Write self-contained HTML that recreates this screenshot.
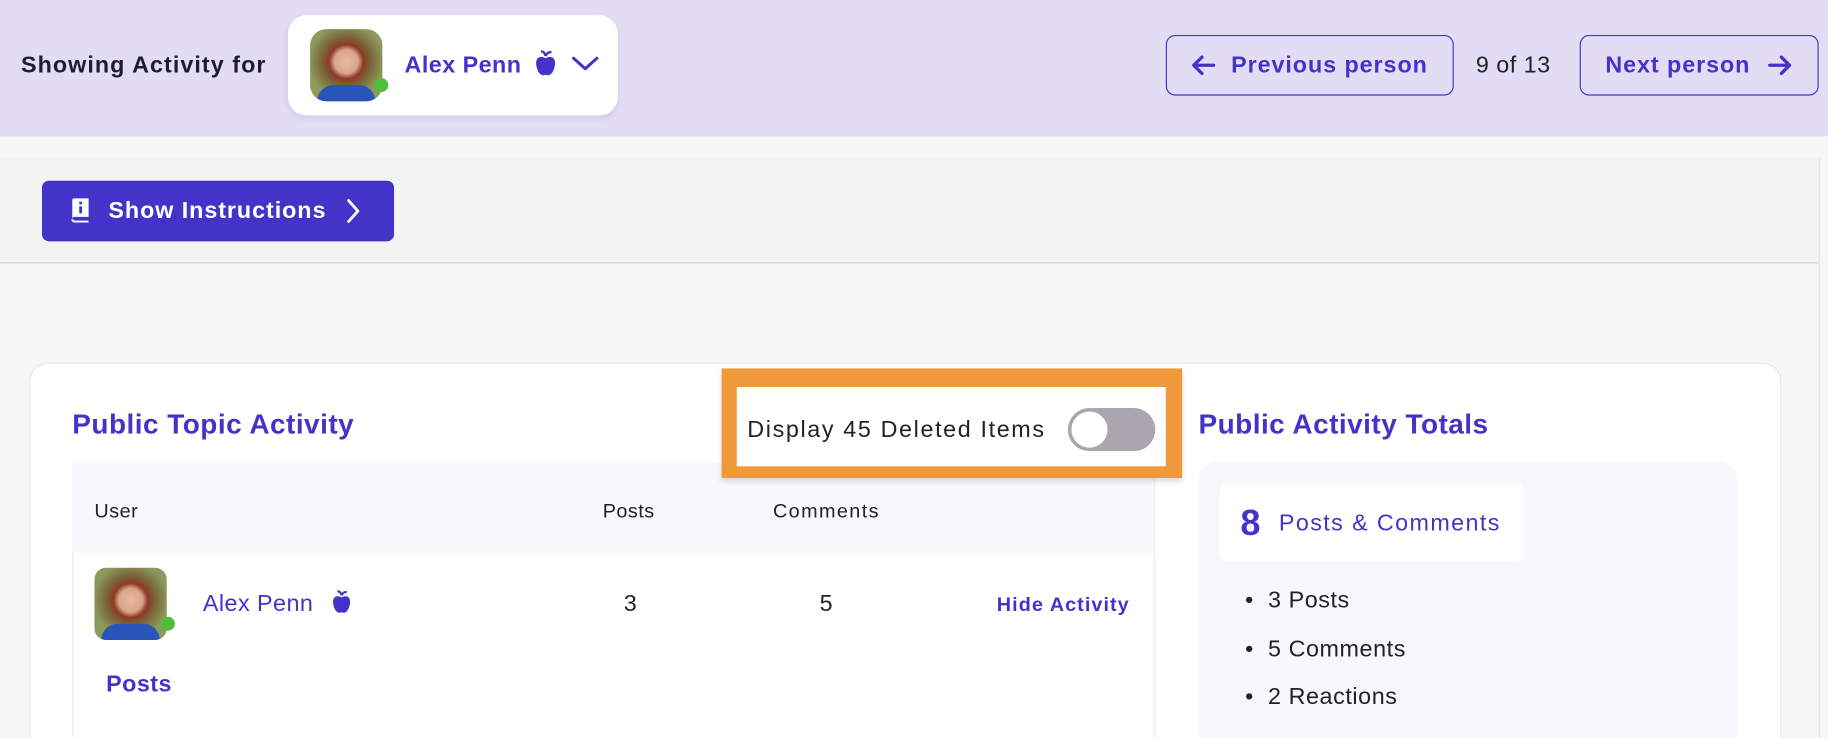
<!DOCTYPE html>
<html><head><meta charset="utf-8"><style>
*{box-sizing:border-box;margin:0;padding:0}
html,body{width:1828px;height:738px;overflow:hidden;background:#f7f7f7;font-family:"Liberation Sans",sans-serif}
#w{position:absolute;left:0;top:0;width:1568px;height:633px;overflow:hidden;transform:scale(1.16582);transform-origin:0 0}
.a{position:absolute;letter-spacing:0.4px}
.p{color:#4433c8}
</style></head><body><div id="w">
<div class="a" style="left:0;top:0;width:1568px;height:117px;background:#e2ddf5"></div>
<div class="a" style="left:18px;top:45px;font-size:20px;font-weight:bold;color:#1f1d2b;letter-spacing:0.9px">Showing Activity for</div>
<div class="a" style="left:247px;top:13px;width:283px;height:86px;background:#fff;border-radius:16px;box-shadow:0 2px 6px rgba(0,0,0,.08)"></div>
<div class="a" style="left:266px;top:25px;width:62px;height:62px;border-radius:14px;background:radial-gradient(circle at 50% 45%,#e8b9a0 0,#d9a58c 22%,#8b3a26 32%,#7b6a3c 48%,#8c9a5c 70%);overflow:hidden"><div class="a" style="left:6px;top:48px;width:50px;height:14px;border-radius:20px 20px 0 0;background:#2a55b8"></div></div>
<div class="a" style="left:321px;top:67px;width:12px;height:12px;border-radius:50%;background:#4fbf3a"></div>
<div class="a p" style="left:347px;top:45px;font-size:20px;font-weight:bold">Alex Penn</div>
<svg class="a" style="left:458px;top:43px" width="20" height="24" viewBox="0 0 20 24"><path d="M10 5 Q9 1 6 1 M10 5 Q12 1 15 2" stroke="#4433c8" stroke-width="2" fill="none"/><path d="M10 7 C5 4 1 7 2 13 C3 20 7 23 10 21 C13 23 17 20 18 13 C19 7 15 4 10 7Z" fill="#4433c8"/></svg>
<svg class="a" style="left:490px;top:47px" width="24" height="16" viewBox="0 0 24 16"><path d="M2 3 L12 12 L22 3" stroke="#4433c8" stroke-width="2.6" fill="none" stroke-linecap="round" stroke-linejoin="round"/></svg>
<div class="a" style="left:1000px;top:30px;width:247px;height:52px;border:1px solid #4433c8;border-radius:8px"></div>
<svg class="a" style="left:1021px;top:47px" width="22" height="18" viewBox="0 0 22 18"><path d="M20 9 H3 M10 2 L3 9 L10 16" stroke="#4433c8" stroke-width="2.8" fill="none" stroke-linecap="round" stroke-linejoin="round"/></svg>
<div class="a p" style="left:1056px;top:45px;font-size:20px;font-weight:bold;letter-spacing:0.8px">Previous person</div>
<div class="a" style="left:1266px;top:45px;font-size:20px;color:#222;letter-spacing:0.4px">9 of 13</div>
<div class="a" style="left:1355px;top:30px;width:205px;height:52px;border:1px solid #4433c8;border-radius:8px"></div>
<div class="a p" style="left:1377px;top:45px;font-size:20px;font-weight:bold;letter-spacing:0.8px">Next person</div>
<svg class="a" style="left:1516px;top:47px" width="22" height="18" viewBox="0 0 22 18"><path d="M2 9 H19 M12 2 L19 9 L12 16" stroke="#4433c8" stroke-width="2.8" fill="none" stroke-linecap="round" stroke-linejoin="round"/></svg>
<div class="a" style="left:0;top:136px;width:1560px;height:90px;background:#f3f3f3;border-bottom:1px solid #d6d6d6"></div>
<div class="a" style="left:1560px;top:136px;width:1px;height:497px;background:#e0e0e0"></div>
<div class="a" style="left:36px;top:155px;width:302px;height:52px;background:#4433c8;border-radius:6px"></div>
<svg class="a" style="left:60px;top:170px" width="18" height="22" viewBox="0 0 18 22"><path d="M2 2 Q2 0 4 0 H16 V16 H4 Q2 16 2 18 Z" fill="#fff"/><path d="M2 18 Q2 20 4 20 H16" stroke="#fff" stroke-width="1.6" fill="none"/><rect x="8" y="3" width="2.4" height="2.4" fill="#4433c8"/><rect x="8" y="7" width="2.4" height="6" fill="#4433c8"/></svg>
<div class="a" style="left:93px;top:170px;font-size:20px;font-weight:bold;color:#fff;letter-spacing:0.8px">Show Instructions</div>
<svg class="a" style="left:296px;top:170px" width="14" height="22" viewBox="0 0 14 22"><path d="M3 2 L11 11 L3 20" stroke="#fff" stroke-width="2.4" fill="none" stroke-linecap="round" stroke-linejoin="round"/></svg>
<div class="a" style="left:25px;top:311px;width:1503px;height:322px;background:#fff;border:1px solid #e6e6e6;border-bottom:none;border-radius:16px 16px 0 0"></div>
<div class="a p" style="left:62px;top:351px;font-size:24px;font-weight:bold">Public Topic Activity</div>
<div class="a" style="left:62px;top:397px;width:929px;height:77px;background:#f7f7fc"></div>
<div class="a" style="left:990px;top:397px;width:1px;height:236px;background:#ececec"></div>
<div class="a" style="left:62px;top:474px;width:1px;height:159px;background:#ececec"></div>
<div class="a" style="left:81px;top:429px;font-size:17px;color:#222">User</div>
<div class="a" style="left:517px;top:429px;font-size:17px;color:#222">Posts</div>
<div class="a" style="left:663px;top:429px;font-size:17px;color:#222;letter-spacing:1.2px">Comments</div>
<div class="a" style="left:81px;top:487px;width:62px;height:62px;border-radius:10px;background:radial-gradient(circle at 50% 45%,#e8b9a0 0,#d9a58c 22%,#8b3a26 32%,#7b6a3c 48%,#8c9a5c 70%);overflow:hidden"><div class="a" style="left:6px;top:48px;width:50px;height:14px;border-radius:20px 20px 0 0;background:#2a55b8"></div></div>
<div class="a" style="left:138px;top:529px;width:12px;height:12px;border-radius:50%;background:#4fbf3a"></div>
<div class="a p" style="left:174px;top:507px;font-size:20px">Alex Penn</div>
<svg class="a" style="left:284px;top:506px" width="18" height="22" viewBox="0 0 20 24"><path d="M10 5 Q9 1 6 1 M10 5 Q12 1 15 2" stroke="#4433c8" stroke-width="2" fill="none"/><path d="M10 7 C5 4 1 7 2 13 C3 20 7 23 10 21 C13 23 17 20 18 13 C19 7 15 4 10 7Z" fill="#4433c8"/></svg>
<div class="a" style="left:535px;top:507px;font-size:20px;color:#222">3</div>
<div class="a" style="left:703px;top:507px;font-size:20px;color:#222">5</div>
<div class="a p" style="left:855px;top:509px;font-size:17px;font-weight:bold;letter-spacing:0.9px">Hide Activity</div>
<div class="a p" style="left:91px;top:576px;font-size:20px;font-weight:bold">Posts</div>
<div class="a" style="left:619px;top:316px;width:395px;height:94px;background:#f0993a;box-shadow:0 3px 5px rgba(0,0,0,.15)"></div>
<div class="a" style="left:632px;top:332px;width:368px;height:68px;background:#fff"></div>
<div class="a" style="left:641px;top:358px;font-size:20px;color:#222;letter-spacing:1.4px">Display 45 Deleted Items</div>
<div class="a" style="left:916px;top:350px;width:75px;height:37px;border-radius:19px;background:#a9a6b0"></div>
<div class="a" style="left:919px;top:353px;width:31px;height:31px;border-radius:50%;background:#fff"></div>
<div class="a p" style="left:1028px;top:351px;font-size:24px;font-weight:bold">Public Activity Totals</div>
<div class="a" style="left:1028px;top:396px;width:462px;height:237px;background:#f7f7fc;border-radius:16px 16px 0 0"></div>
<div class="a" style="left:1046px;top:415px;width:261px;height:66px;background:#fff;border-radius:6px"></div>
<div class="a p" style="left:1064px;top:431px;font-size:31px;font-weight:bold">8</div>
<div class="a p" style="left:1097px;top:438px;font-size:20px;letter-spacing:1.2px">Posts &amp; Comments</div>
<div class="a" style="left:1068px;top:495px;font-size:20px;color:#222;line-height:41.5px;letter-spacing:0.5px">•&nbsp;&nbsp;3 Posts<br>•&nbsp;&nbsp;5 Comments<br>•&nbsp;&nbsp;2 Reactions</div>
</div></body></html>
